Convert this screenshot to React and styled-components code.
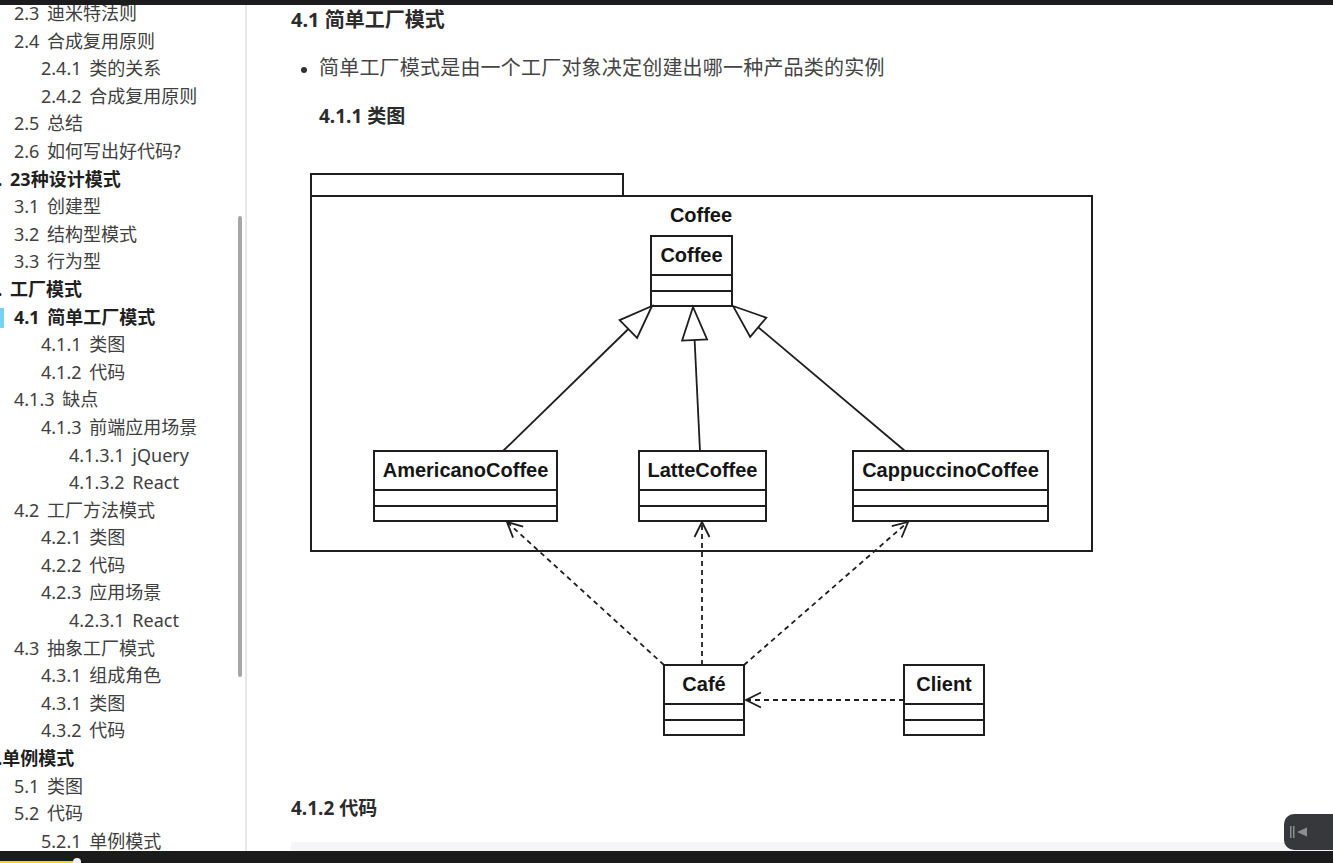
import React from "react";
import styled, { createGlobalStyle } from "styled-components";

const GlobalStyle = createGlobalStyle`
  html, body { margin: 0; padding: 0; background: #ffffff; }
  body { font-family: "Noto Sans", "Noto Sans CJK SC", sans-serif; }
  * { box-sizing: border-box; }
`;

const Page = styled.div`
  width: 1333px;
  height: 863px;
  display: flex;
  flex-direction: column;
  overflow: hidden;
  position: relative;
  background: #fff;
`;

const TopBar = styled.div`
  height: 5px;
  flex: none;
  background: #1c1c1e;
`;

const Body = styled.div`
  flex: 1;
  display: flex;
  min-height: 0;
`;

const Sidebar = styled.nav`
  width: 247px;
  flex: none;
  position: relative;
  overflow: hidden;
  border-right: 2px solid #e8e8e8;
  font-family: "Noto Sans", "Noto Sans CJK SC", sans-serif;
`;

const TocList = styled.ul`
  list-style: none;
  margin: -5px 0 0 0;
  padding: 0;
`;

const TocItem = styled.li`
  position: relative;
  height: 27.6px;
  line-height: 27.6px;
  font-size: 18px;
  white-space: nowrap;
  word-spacing: 3px;
  color: ${(p) => (p.$bold ? "#1f1f1f" : "#404040")};
  font-weight: ${(p) => (p.$bold ? 700 : 400)};
  padding-left: ${(p) => [0, 0, 14, 41, 69][p.$level]}px;
  text-indent: ${(p) => (p.$level === 1 ? -13 : 0)}px;
`;

const ActiveMark = styled.span`
  position: absolute;
  left: 0;
  top: 4px;
  width: 4px;
  height: 20px;
  background: #74d2f2;
`;

const ScrollThumb = styled.div`
  position: absolute;
  left: 238px;
  top: 211px;
  width: 4px;
  height: 461px;
  border-radius: 2px;
  background: #a6a6a6;
`;

const Main = styled.main`
  flex: 1;
  min-width: 0;
  overflow: hidden;
  padding-left: 44px;
  color: #333;
  font-family: "Noto Sans", "Noto Sans CJK SC", sans-serif;
`;

const H2 = styled.h2`
  margin: 0;
  font-size: 20px;
  line-height: 30px;
  font-weight: 700;
  color: #2b2b2b;
`;

const Bullets = styled.ul`
  margin: 18px 0 0 0;
  padding-left: 28px;
`;

const Bullet = styled.li`
  font-size: 20px;
  line-height: 30px;
  letter-spacing: 0.2px;
  color: #444;
  &::marker { font-size: 16px; color: #333; }
`;

const H4 = styled.h4`
  margin: ${(p) => p.$mt}px 0 0 ${(p) => p.$ml}px;
  font-size: 19px;
  line-height: 28px;
  font-weight: 700;
  color: #2b2b2b;
`;

const Diagram = styled.svg`
  display: block;
  margin: 30px 0 0 9px;
  width: 800px;
  height: 590px;
`;

const CodeBlock = styled.div`
  margin-top: 20px;
  height: 60px;
  background: #f6f6f8;
`;

const Label = styled.text`
  font-family: "Liberation Sans", Arial, sans-serif;
  font-weight: 700;
  font-size: 20px;
  fill: #151515;
`;

const BottomBar = styled.div`
  height: 12px;
  flex: none;
  background: #1b1b1c;
  position: relative;
`;

const Progress = styled.div`
  position: absolute;
  left: 0;
  bottom: 0;
  width: 75px;
  height: 2px;
  background: #f4d31a;
`;

const Knob = styled.div`
  position: absolute;
  left: 73px;
  bottom: -3px;
  width: 8px;
  height: 8px;
  border-radius: 50%;
  background: #f2f2f2;
`;

const SideToggle = styled.div`
  position: absolute;
  right: 0;
  bottom: 13px;
  width: 49px;
  height: 36px;
  background: #37383c;
  border-radius: 10px 0 0 10px;
  display: flex;
  align-items: center;
  padding-left: 5px;
`;

const toc = [
  [2, "2.3 迪米特法则"],
  [2, "2.4 合成复用原则"],
  [3, "2.4.1 类的关系"],
  [3, "2.4.2 合成复用原则"],
  [2, "2.5 总结"],
  [2, "2.6 如何写出好代码?"],
  [1, "3. 23种设计模式", true],
  [2, "3.1 创建型"],
  [2, "3.2 结构型模式"],
  [2, "3.3 行为型"],
  [1, "4. 工厂模式", true],
  [2, "4.1 简单工厂模式", true, true],
  [3, "4.1.1 类图"],
  [3, "4.1.2 代码"],
  [2, "4.1.3 缺点"],
  [3, "4.1.3 前端应用场景"],
  [4, "4.1.3.1 jQuery"],
  [4, "4.1.3.2 React"],
  [2, "4.2 工厂方法模式"],
  [3, "4.2.1 类图"],
  [3, "4.2.2 代码"],
  [3, "4.2.3 应用场景"],
  [4, "4.2.3.1 React"],
  [2, "4.3 抽象工厂模式"],
  [3, "4.3.1 组成角色"],
  [3, "4.3.1 类图"],
  [3, "4.3.2 代码"],
  [1, "5.单例模式", true],
  [2, "5.1 类图"],
  [2, "5.2 代码"],
  [3, "5.2.1 单例模式"],
];

const STROKE = "#1e1e1e";

function ClassBox({ x, y, w, name }) {
  return (
    <g>
      <rect x={x} y={y} width={w} height={70} fill="#fff" stroke={STROKE} strokeWidth="2" />
      <line x1={x} y1={y + 39} x2={x + w} y2={y + 39} stroke={STROKE} strokeWidth="2" />
      <line x1={x} y1={y + 55} x2={x + w} y2={y + 55} stroke={STROKE} strokeWidth="2" />
      <Label x={x + w / 2} y={y + 26} textAnchor="middle">{name}</Label>
    </g>
  );
}

function unit(fx, fy, tx, ty) {
  const dx = tx - fx, dy = ty - fy;
  const l = Math.hypot(dx, dy);
  return [dx / l, dy / l];
}

function Generalization({ from, tip }) {
  const [ux, uy] = unit(from[0], from[1], tip[0], tip[1]);
  const L = 33, H = 12.5;
  const bx = tip[0] - ux * L, by = tip[1] - uy * L;
  const px = -uy, py = ux;
  const pts = `${tip[0]},${tip[1]} ${bx + px * H},${by + py * H} ${bx - px * H},${by - py * H}`;
  return (
    <g>
      <line x1={from[0]} y1={from[1]} x2={bx} y2={by} stroke={STROKE} strokeWidth="1.8" />
      <polygon points={pts} fill="#fff" stroke={STROKE} strokeWidth="1.8" strokeLinejoin="miter" />
    </g>
  );
}

function Dependency({ from, tip }) {
  const [ux, uy] = unit(from[0], from[1], tip[0], tip[1]);
  const L = 15, H = 7.5;
  const bx = tip[0] - ux * L, by = tip[1] - uy * L;
  const px = -uy, py = ux;
  const d = `M${bx + px * H},${by + py * H} L${tip[0]},${tip[1]} L${bx - px * H},${by - py * H}`;
  return (
    <g>
      <line x1={from[0]} y1={from[1]} x2={tip[0]} y2={tip[1]} stroke={STROKE} strokeWidth="1.8" strokeDasharray="5 4" />
      <path d={d} fill="none" stroke={STROKE} strokeWidth="1.8" />
    </g>
  );
}

function ClassDiagram() {
  return (
    <Diagram viewBox="300 160 800 590">
      <rect x="311" y="174" width="312" height="22" fill="#fff" stroke={STROKE} strokeWidth="2" />
      <rect x="311" y="196" width="781" height="355" fill="#fff" stroke={STROKE} strokeWidth="2" />
      <Label x="701" y="222" textAnchor="middle">Coffee</Label>

      <ClassBox x={651} y={236} w={81} name="Coffee" />
      <ClassBox x={374} y={451} w={183} name="AmericanoCoffee" />
      <ClassBox x={639} y={451} w={127} name="LatteCoffee" />
      <ClassBox x={853} y={451} w={195} name="CappuccinoCoffee" />

      <Generalization from={[503, 451]} tip={[652, 306]} />
      <Generalization from={[700, 451]} tip={[693, 307]} />
      <Generalization from={[905, 451]} tip={[733, 306]} />

      <ClassBox x={664} y={665} w={80} name="Café" />
      <ClassBox x={904} y={665} w={80} name="Client" />

      <Dependency from={[664, 665]} tip={[507, 522]} />
      <Dependency from={[702, 665]} tip={[702, 522]} />
      <Dependency from={[744, 665]} tip={[908, 522]} />
      <Dependency from={[904, 700]} tip={[746, 700]} />
    </Diagram>
  );
}

export default function App() {
  return (
    <Page>
      <GlobalStyle />
      <TopBar />
      <Body>
        <Sidebar>
          <TocList>
            {toc.map(([level, text, bold, active], i) => (
              <TocItem key={i} $level={level} $bold={bold}>
                {active && <ActiveMark />}
                {text}
              </TocItem>
            ))}
          </TocList>
          <ScrollThumb />
        </Sidebar>
        <Main>
          <H2>4.1 简单工厂模式</H2>
          <Bullets>
            <Bullet>简单工厂模式是由一个工厂对象决定创建出哪一种产品类的实例</Bullet>
          </Bullets>
          <H4 $mt={19} $ml={28}>4.1.1 类图</H4>
          <ClassDiagram />
          <H4 $mt={44} $ml={0}>4.1.2 代码</H4>
          <CodeBlock />
        </Main>
      </Body>
      <BottomBar>
        <Progress />
        <Knob />
      </BottomBar>
      <SideToggle>
        <svg width="20" height="14" viewBox="0 0 20 14">
          <rect x="1" y="1" width="1.5" height="12" fill="#8e8e92" />
          <rect x="4" y="1" width="1.5" height="12" fill="#8e8e92" />
          <polygon points="8,7 18,2.5 18,11.5" fill="#8e8e92" />
        </svg>
      </SideToggle>
    </Page>
  );
}
